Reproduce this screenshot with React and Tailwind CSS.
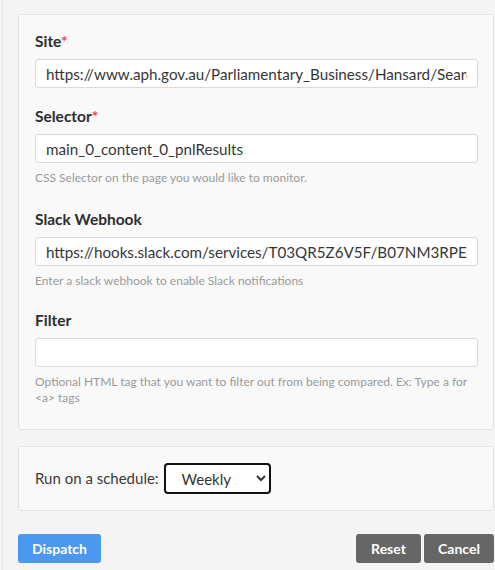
const fieldClass =
  'block w-full h-[29px] rounded-[3px] border border-[#d9d9d9] bg-white px-[10px] text-[15.2px] text-[#363636] outline-none'

function Label({ children, required }) {
  return (
    <label className="block h-6 leading-6 text-[15.5px] font-bold text-[#2e2e2e] mb-[6px]">
      {children}
      {required && <span className="text-[#f14668]">*</span>}
    </label>
  )
}

function Help({ children }) {
  return <p className="mt-[7px] text-[12px] leading-4 text-[#9a9a9a]">{children}</p>
}

export default function App() {
  return (
    <div className="min-h-screen bg-[#f4f4f4] font-['Lato','Noto_Sans',sans-serif]">
      <div className="ml-[2px] min-h-screen border-l border-[#e3e3e3] pl-[15px] pr-px pt-[14px]">
        {/* Monitor settings */}
        <div className="rounded-[3px] border border-[#e3e3e3] bg-[#f9f9f9] pl-[16px] pr-[15px] pt-[14px] pb-[23px]">
          <div className="mb-[16px]">
            <Label required>Site</Label>
            <input
              className={fieldClass}
              readOnly
              value="https://www.aph.gov.au/Parliamentary_Business/Hansard/Search"
            />
          </div>
          <div className="mb-[21px]">
            <Label required>Selector</Label>
            <input className={fieldClass} readOnly value="main_0_content_0_pnlResults" />
            <Help>CSS Selector on the page you would like to monitor.</Help>
          </div>
          <div className="mb-[19px]">
            <Label>Slack Webhook</Label>
            <input
              className={fieldClass}
              readOnly
              value="https://hooks.slack.com/services/T03QR5Z6V5F/B07NM3RPEAG/xxxx"
            />
            <Help>Enter a slack webhook to enable Slack notifications</Help>
          </div>
          <div>
            <Label>Filter</Label>
            <input className={fieldClass} readOnly value="" />
            <Help>
              Optional HTML tag that you want to filter out from being compared. Ex: Type a for &lt;a&gt; tags
            </Help>
          </div>
        </div>

        {/* Schedule */}
        <div className="mt-4 flex items-center gap-[5px] rounded-[3px] border border-[#e3e3e3] bg-[#f9f9f9] px-[16px] py-[16px]">
          <span className="text-[15px] text-[#3a3a3a]">Run on a schedule:</span>
          <select
            defaultValue="Weekly"
            className="h-[31px] w-[107px] rounded-[4px] border-2 border-[#111] bg-white pl-[12px] text-[15px] text-[#333]"
          >
            <option>Daily</option>
            <option>Weekly</option>
            <option>Monthly</option>
          </select>
        </div>

        {/* Actions */}
        <div className="mt-[23px] flex items-center">
          <button className="h-[29px] w-[83px] rounded-[3px] bg-[#4a98f0] text-[14px] font-bold text-white">
            Dispatch
          </button>
          <div className="ml-auto flex gap-[3px]">
            <button className="h-[29px] w-[65px] rounded-[3px] bg-[#666666] text-[14px] font-bold text-white">
              Reset
            </button>
            <button className="h-[29px] w-[70px] rounded-[3px] bg-[#666666] text-[14px] font-bold text-white">
              Cancel
            </button>
          </div>
        </div>
      </div>
    </div>
  )
}
